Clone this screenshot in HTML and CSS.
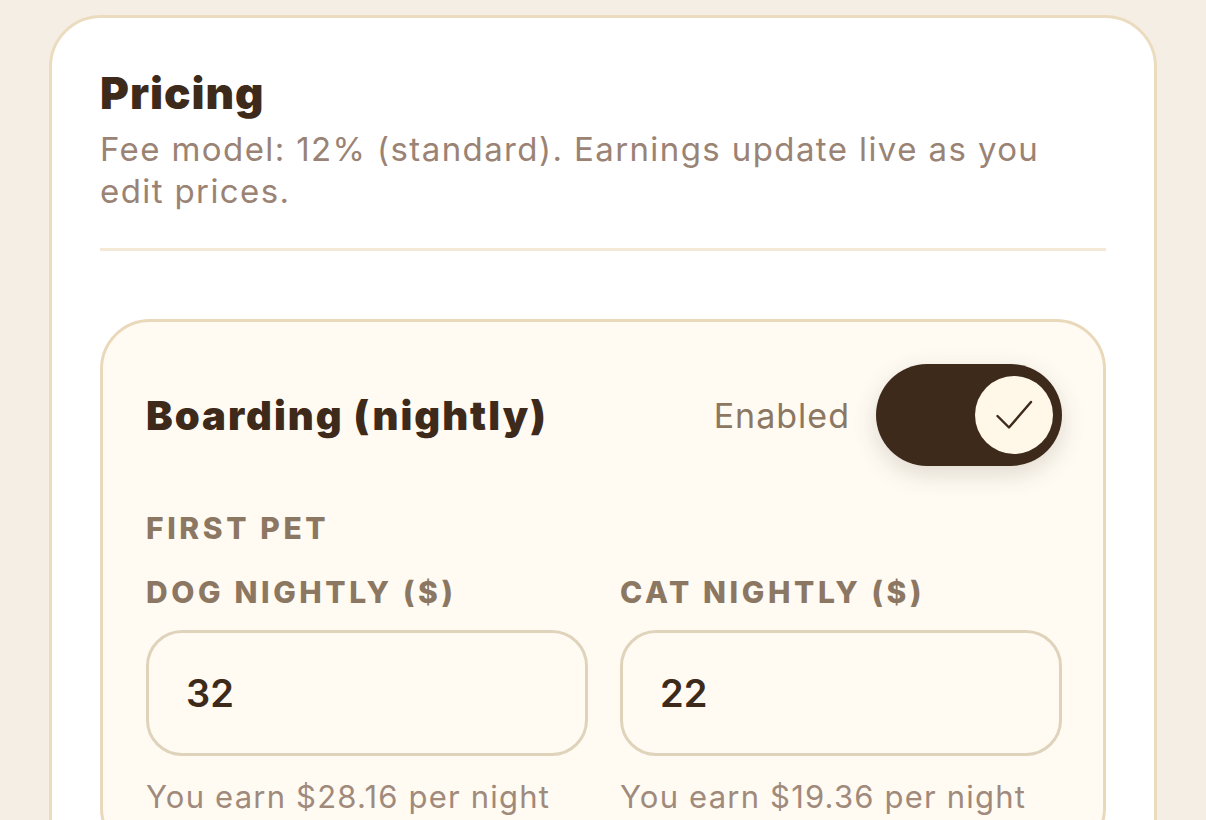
FILE: index.html
```html
<!DOCTYPE html>
<html>
<head>
	<meta charset="utf-8" />
	<title>Pricing</title>
	<link rel="stylesheet" href="styles.css">
</head>
<body>
	<section class="panel">
		<h1>Pricing</h1>
		<p class="lead">Fee model: 12% (standard). Earnings update live as you edit prices.</p>
		<hr class="divider" />

		<div class="service">
			<div class="service-head">
				<h2>Boarding (nightly)</h2>
				<div class="switch-wrap">
					<span class="switch-label">Enabled</span>
					<button class="switch on" type="button" aria-pressed="true">
						<span class="knob">
							<svg width="38" height="32" viewBox="0 0 38 32" fill="none" stroke="#3d2a1a" stroke-width="2.4" stroke-linecap="round" stroke-linejoin="round"><path d="M2.5 17L14 28.5L36 3"/></svg>
						</span>
					</button>
				</div>
			</div>

			<div class="group-label">First pet</div>
			<div class="fields">
				<div class="field">
					<label>Dog nightly ($)</label>
					<div class="input">32</div>
					<div class="earn">You earn $28.16 per night</div>
				</div>
				<div class="field">
					<label>Cat nightly ($)</label>
					<div class="input">22</div>
					<div class="earn">You earn $19.36 per night</div>
				</div>
			</div>
		</div>
	</section>
</body>
</html>
```

FILE: styles.css
```css
body {
	margin: 0;
	padding: 15px 49px;
	background: #f5eee4;
	font-family: Inter, "Noto Sans", sans-serif;
	color: #3d2a1a;
}

.panel {
	background: #fff;
	border: 3px solid #ecdcbf;
	border-radius: 52px;
	padding: 48px 48px 60px;
}

h1 {
	margin: 0;
	font-size: 44px;
	font-weight: 900;
	line-height: 54px;
	letter-spacing: 1px;
}

.lead {
	margin: 8px 0 0;
	max-width: 960px;
	font-size: 33px;
	line-height: 42px;
	letter-spacing: 1.4px;
	color: #9a8374;
}

.divider {
	border: 0;
	height: 3px;
	background: #f4e9d7;
	margin: 36px 0 68px;
}

.service {
	background: #fffbf3;
	border: 3px solid #ead8bb;
	border-radius: 50px;
	padding: 42px 41px 40px 43px;
}

.service-head {
	display: flex;
	align-items: center;
	justify-content: space-between;
}

h2 {
	margin: 0;
	font-size: 40px;
	font-weight: 900;
	letter-spacing: 2px;
}

.switch-wrap {
	display: flex;
	align-items: center;
	gap: 26px;
}

.switch-label {
	font-size: 34px;
	letter-spacing: 1px;
	color: #8c7762;
}

.switch {
	width: 186px;
	height: 102px;
	border: 0;
	border-radius: 51px;
	background: #3d2a1a;
	padding: 0 9px;
	display: flex;
	align-items: center;
	justify-content: flex-end;
	box-shadow: 0 8px 24px rgba(61, 42, 26, 0.16);
}

.knob {
	width: 78px;
	height: 78px;
	border-radius: 50%;
	background: #fff7e8;
	display: flex;
	align-items: center;
	justify-content: center;
}

.group-label, .field label {
	display: block;
	font-size: 30px;
	font-weight: 800;
	letter-spacing: 3.6px;
	line-height: 36px;
	text-transform: uppercase;
	color: #8c7762;
}

.group-label {
	margin-top: 44px;
}

.fields {
	display: grid;
	grid-template-columns: 1fr 1fr;
	gap: 32px;
	margin-top: 28px;
}

.input {
	margin-top: 20px;
	height: 120px;
	border: 3px solid #e0d3bb;
	border-radius: 36px;
	background: #fffbf3;
	padding: 0 37px;
	display: flex;
	align-items: center;
	font-size: 38px;
	font-weight: 600;
}

.earn {
	margin-top: 22px;
	font-size: 31px;
	letter-spacing: 1.2px;
	color: #a08a7c;
}
```
